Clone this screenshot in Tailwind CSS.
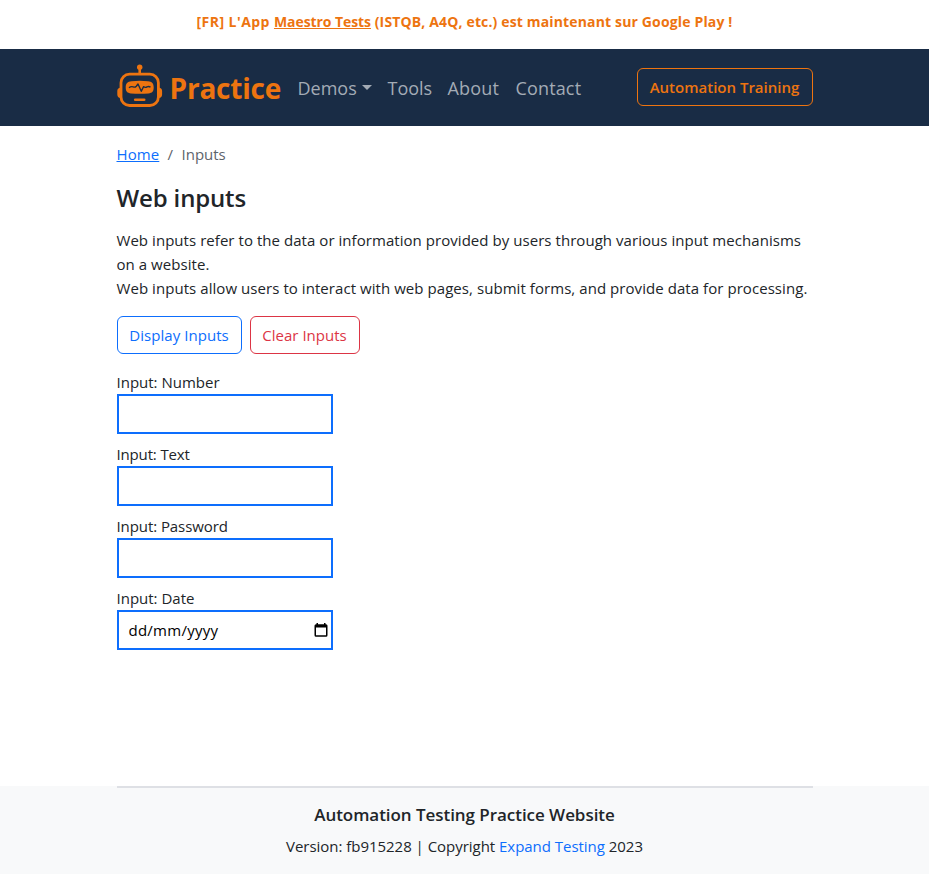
<!DOCTYPE html>
<html lang="en">
<head>
<meta charset="utf-8">
<title>Web inputs</title>
<script src="https://cdn.jsdelivr.net/npm/@tailwindcss/browser@4"></script>
</head>
<body class="flex h-[874px] flex-col overflow-hidden bg-white font-['Open_Sans','Noto_Sans',sans-serif] text-[15px] leading-6 text-[#212529]">
<div class="flex h-[49px] justify-center pt-[10px] text-[14px] font-bold text-[#ed7410]"><p class="whitespace-nowrap tracking-[0.15px]"><span class="tracking-[0.45px]">[FR] L'App </span><a class="tracking-[-0.08px] underline">Maestro Tests</a> (ISTQB, A4Q, etc.) est maintenant sur Google Play !</p></div>
<header class="h-[77px] bg-[#192c45]">
<nav class="mx-auto flex h-full w-[696px] items-center whitespace-nowrap text-[18px] text-[#a3abb5]">
<svg class="-mt-[3px] mr-2 h-[44px] w-[46px] shrink-0" viewBox="0 0 46 44" fill="none" stroke="#ed7410">
<circle cx="22.7" cy="3.2" r="2.7" fill="#ed7410" stroke="none"/>
<path d="M22.7 4v7" stroke-width="2.6"/>
<rect x="4" y="10.2" width="37.4" height="31.3" rx="8.5" stroke-width="2.8"/>
<path d="M3.8 23.5C1.2 24 .3 25 .3 27v3.5c0 2 1 3.2 3.5 3.6zM41.6 23.5c2.6.5 3.5 1.500 3.500 3.500v3.500c0 2-1 3.200-3.500 3.600z" fill="#ed7410" stroke="none"/>
<path d="M14.500 17.200Q22.700 16.200 31 17.200C35 17.600 36.700 19.300 36.700 23.300C36.700 27.700 35.300 29 31.500 29.400Q22.700 30.300 14 29.400C10.200 29 8.700 27.700 8.700 23.300C8.700 19.300 10.500 17.600 14.500 17.200Z" fill="#ed7410" stroke="none"/>
<path d="M12 23.700Q14 22 16.300 22.900Q18 23.600 19.300 22.200L21 20l3.300 7.300 2.200-4.600q1.800 1.200 3.500.2q1.800-.8 3.500.3" stroke="#192c45" stroke-width="1.400" stroke-linejoin="round"/>
<path d="M18.200 35.700h9" stroke-width="2.600" stroke-linecap="round"/>
</svg>
<a class="w-[127px] text-[28px] font-bold text-[#ed7410]"><span class="-ml-px tracking-[-0.2px]">Practice</span></a>
<a class="flex w-[90px] items-center"><span>Demos</span><span class="ml-[5px] border-x-[5px] border-t-[5px] border-x-transparent"></span></a>
<a class="w-[60px]">Tools</a><a class="w-[68px] tracking-[0.2px]">About</a><a class="tracking-[0.15px]">Contact</a>
<a class="-mt-[2px] ml-auto flex h-[38px] w-[176px] items-center justify-center rounded-[6px] border border-[#ed7410] text-[15px] font-semibold text-[#ed7410]"><span>Automation Training</span></a>
</nav>
</header>
<main class="mx-auto w-[696px] whitespace-nowrap">
<div class="flex pt-[16px] text-[#5d646b]"><a class="w-[51px] text-[#0d6efd] underline"><span class="tracking-[0.1px]">Home</span></a><span class="w-[14px]">/</span><span>Inputs</span></div>
<h1 class="mt-[17px] text-[24px] leading-[30px] font-semibold tracking-[-0.15px]">Web inputs</h1>
<div class="mt-[15px] tracking-[0.05px]"><p>Web inputs refer to the data or information provided by users through various input mechanisms</p><p>on a website.</p><p class="tracking-[0.06px]">Web inputs allow users to interact with web pages, submit forms, and provide data for processing.</p></div>
<div class="mt-[16px] flex gap-2">
<button class="h-[38px] w-[125px] rounded-[6px] border border-[#0d6efd] tracking-[0.05px] text-[#0d6efd]">Display Inputs</button>
<button class="h-[38px] w-[110px] rounded-[6px] border border-[#dc3545] text-[#dc3545]">Clear Inputs</button>
</div>
<form class="mt-4 flex w-[216px] flex-col gap-2">
<label class="block">Input: Number<input class="block h-10 w-full border-2 border-[#0d6efd] px-[10px]"></label>
<label class="block"><span class="tracking-[-0.15px]">Input: Text</span><input class="block h-10 w-full border-2 border-[#0d6efd] px-[10px]"></label>
<label class="block"><span class="tracking-[-0.08px]">Input: Password</span><input type="password" class="block h-10 w-full border-2 border-[#0d6efd] px-[10px]"></label>
<div>Input: Date<div class="flex h-10 items-center justify-between border-2 border-[#0d6efd] pr-[3px] pl-[10px] text-black"><span class="tracking-[0.25px]">dd/mm/yyyy</span><svg class="h-[14px] w-[14px]" viewBox="0 0 14 14"><path d="M2.500 0H4v1.200h6V0h1.500v1.200H12a1.500 1.500 0 0 1 1.500 1.500v9.500a1.500 1.500 0 0 1-1.500 1.500H2A1.500 1.500 0 0 1 .5 12.200V2.700A1.500 1.500 0 0 1 2 1.200h.5zM2 4.500v7.700h10V4.500z" fill-rule="evenodd"/></svg></div></div>
</form>
</main>
<footer class="mt-auto h-[88px] bg-[#f8f9fa]">
<div class="mx-auto w-[696px] border-t-2 border-[#dee0e5] pt-[15px] text-center whitespace-nowrap">
<h2 class="text-[17px] font-semibold tracking-[-0.05px]">Automation Testing Practice Website</h2>
<p class="mt-[7px] tracking-[-0.03px]">Version: fb915228 | Copyright <a class="text-[#0d6efd]">Expand Testing</a> 2023</p>
</div>
</footer>
</body>
</html>
